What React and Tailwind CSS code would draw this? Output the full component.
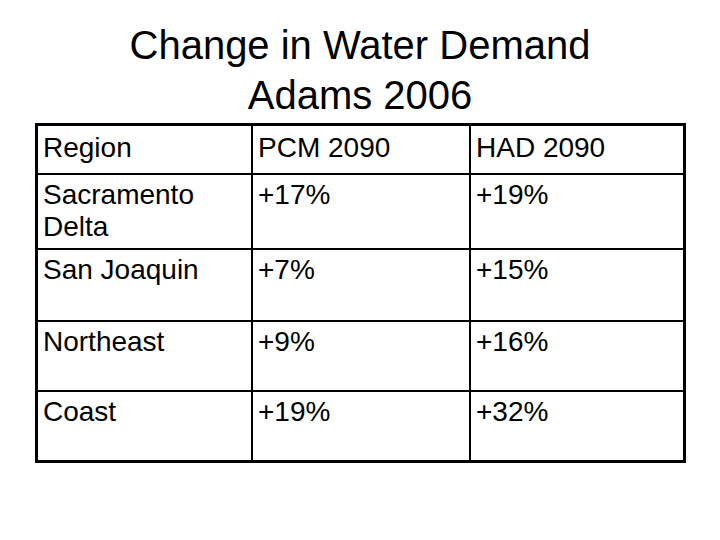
import React from "react";

const rows = [
  { h: "h-[47px]", cells: ["Region", "PCM 2090", "HAD 2090"] },
  { h: "h-[75px]", cells: ["Sacramento Delta", "+17%", "+19%"] },
  { h: "h-[72px]", cells: ["San Joaquin", "+7%", "+15%"] },
  { h: "h-[70px]", cells: ["Northeast", "+9%", "+16%"] },
  { h: "h-[70px]", cells: ["Coast", "+19%", "+32%"] },
];

const App = () => {
  return (
    <div
      className="w-[720px] h-[540px] bg-white text-black overflow-hidden"
      style={{ fontFamily: '"Liberation Sans", Arial, sans-serif' }}
    >
      <h1 className="pt-[20px] text-center text-[40px] leading-[50px] font-normal">
        Change in Water Demand
        <br />
        Adams 2006
      </h1>

      <div className="ml-[35px] mt-[3px] w-[651px] border-[3px] border-black">
        {rows.map((row, i) => (
          <div
            key={i}
            className={`grid grid-cols-[213px_218px_1fr] ${row.h} ${i > 0 ? "border-t-2 border-black" : ""}`}
          >
            {row.cells.map((c, j) => (
              <div
                key={j}
                className={`pl-[5px] text-[28px] leading-[32px] ${i > 0 ? "pt-[4px]" : "pt-[6px]"} ${j > 0 ? "border-l-2 border-black" : ""} ${j === 0 && c === "Sacramento Delta" ? "pr-[50px]" : ""}`}
              >
                {c}
              </div>
            ))}
          </div>
        ))}
      </div>
    </div>
  );
};

export default App;
